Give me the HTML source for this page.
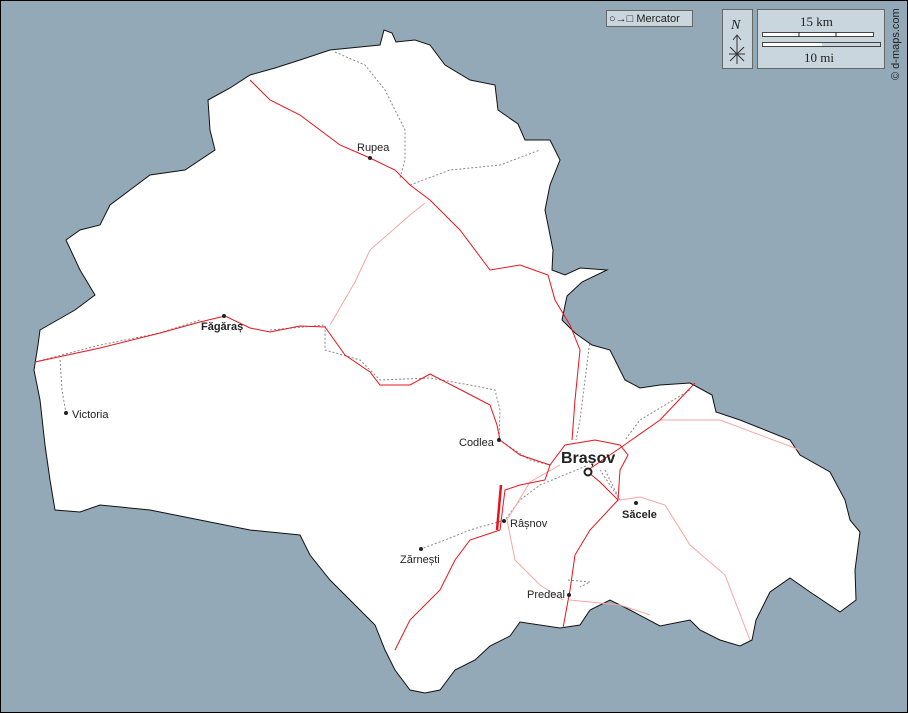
<!DOCTYPE html>
<html><head><meta charset="utf-8"><style>
html,body{margin:0;padding:0;background:#000}
svg{display:block}
text{font-family:"Liberation Sans",sans-serif;font-size:11px;fill:#222}
.b{font-weight:bold}
</style></head><body>
<svg width="908" height="713" viewBox="0 0 908 713">
<rect x="1" y="1" width="906" height="711" fill="#94a9b8"/>
<path fill="#fff" stroke="#111" stroke-width="1" d="M208,100 L230,88 250,75 275,68 300,60 330,50 360,47 380,45 384,30 392,33 396,42 415,40 430,45 445,65 470,80 495,85 498,110 518,124 525,140 550,140 560,160 550,185 545,210 553,250 552,270 565,275 580,268 607,270 582,282 567,296 562,320 575,333 592,345 610,350 625,380 640,388 660,385 690,383 712,395 716,412 740,420 790,440 800,455 830,472 845,500 850,520 860,532 855,570 856,600 840,612 810,592 790,578 770,592 756,620 752,640 740,646 720,640 700,630 690,620 660,626 630,610 610,600 590,610 580,625 560,628 520,622 510,636 490,646 475,660 455,670 440,690 425,693 410,690 395,670 385,650 375,625 350,600 330,580 310,555 300,535 250,530 200,520 150,510 100,505 80,512 55,510 50,480 45,445 40,400 34,370 38,345 40,330 75,310 95,295 80,270 66,240 80,230 100,225 110,205 130,190 150,175 185,170 215,150 210,130 Z"/>
<g fill="none" stroke="#888" stroke-width="1" stroke-dasharray="2,2">
<path d="M335,52 L365,65 385,90 395,110 405,130 405,160 400,178"/>
<path d="M410,185 L450,170 500,165 540,150"/>
<path d="M35,362 L100,345 160,333 200,320"/>
<path d="M60,360 L62,390 66,413"/>
<path d="M270,330 L325,325 325,350 360,360 380,380 430,378 470,385 495,390 500,410 499,440 530,460 550,465"/>
<path d="M590,340 L585,380 580,420 576,440"/>
<path d="M605,470 L615,490 620,500 600,470"/>
<path d="M690,390 L640,420 625,440"/>
<path d="M586,466 L540,485 520,500 505,520 470,530 445,540 421,549"/>
<path d="M568,580 L590,582 580,587"/>
</g>
<g fill="none" stroke="#f4a6a6" stroke-width="1">
<path d="M330,325 L355,282 370,250 410,215 425,203"/>
<path d="M560,465 L530,482 507,520 515,560 540,585 563,600"/>
<path d="M620,500 L640,497 665,505 690,545 725,575 750,640"/>
<path d="M660,420 L720,420 800,450"/>
<path d="M570,600 L620,605 650,615"/>
</g>
<g fill="none" stroke="#e8141c" stroke-width="1">
<path d="M35,362 L100,348 160,333 200,322 225,316 250,328 270,332 300,326 325,327 345,355 370,372 380,385 410,385 430,374 465,392 490,405 497,425 500,440 520,455 550,465"/>
<path d="M550,465 L565,445 595,440 620,445 628,455 620,470 618,500 600,482 588,472"/>
<path d="M250,80 L270,100 300,115 340,145 370,158 395,170 410,185 430,200 460,230 490,270 520,265 548,275 555,300 570,325 580,350 575,400 572,440"/>
<path d="M588,470 L620,448 660,420 695,383"/>
<path d="M618,500 L590,530 575,555 570,590 563,628"/>
<path d="M550,465 L545,480 520,485 505,490 500,530 470,540 455,560 440,590 410,620 395,650"/>
<path d="M501,485 L497,530" stroke-width="2.5"/>
</g>
<g fill="#222">
<circle cx="370" cy="158" r="2"/><circle cx="224" cy="316" r="2"/><circle cx="66" cy="413" r="2"/>
<circle cx="499" cy="440" r="2"/><circle cx="636" cy="503" r="2"/><circle cx="504" cy="521" r="2"/>
<circle cx="421" cy="549" r="2"/><circle cx="569" cy="595" r="2"/>
</g>
<circle cx="588" cy="472" r="3.5" fill="#fff" stroke="#222" stroke-width="2"/>
<text x="357" y="151">Rupea</text>
<text x="201" y="330" class="b">Făgăraș</text>
<text x="72" y="418">Victoria</text>
<text x="459" y="446">Codlea</text>
<text x="561" y="463" class="b" style="font-size:16px">Brașov</text>
<text x="622" y="518" class="b">Săcele</text>
<text x="510" y="527">Râșnov</text>
<text x="400" y="563">Zărnești</text>
<text x="527" y="598">Predeal</text>
<rect x="606.5" y="10.5" width="86" height="16" fill="#c9d6de" stroke="#666"/>
<text x="609" y="22" style="font-size:11px">○→□ Mercator</text>
<rect x="722.5" y="9.5" width="30" height="59" fill="#c9d6de" stroke="#666"/>
<text x="731" y="29" style="font-family:'Liberation Serif',serif;font-style:italic;font-size:14px">N</text>
<path d="M737,35 V64 M733,40 L737,35 741,40 M730,47 L744,61 M744,47 L730,61 M729,54 H745" stroke="#333" fill="none" stroke-width="1"/>
<rect x="757.5" y="9.5" width="127" height="59" fill="#c9d6de" stroke="#666"/>
<text x="800" y="26" style="font-family:'Liberation Serif',serif;font-size:13px">15 km</text>
<rect x="762.5" y="32.5" width="111" height="4" fill="#fff" stroke="#444"/>
<rect x="799" y="33" width="37" height="3" fill="#fff"/>
<path d="M799,32 V37 M836,32 V37" stroke="#222"/>
<rect x="762.5" y="42.5" width="118" height="4" fill="#c9d6de" stroke="#444"/>
<rect x="763" y="43" width="59" height="3" fill="#fff"/>
<text x="804" y="62" style="font-family:'Liberation Serif',serif;font-size:13px">10 mi</text>
<text transform="translate(899,80) rotate(-90)" style="font-size:11px">© d-maps.com</text>
</svg>
</body></html>
